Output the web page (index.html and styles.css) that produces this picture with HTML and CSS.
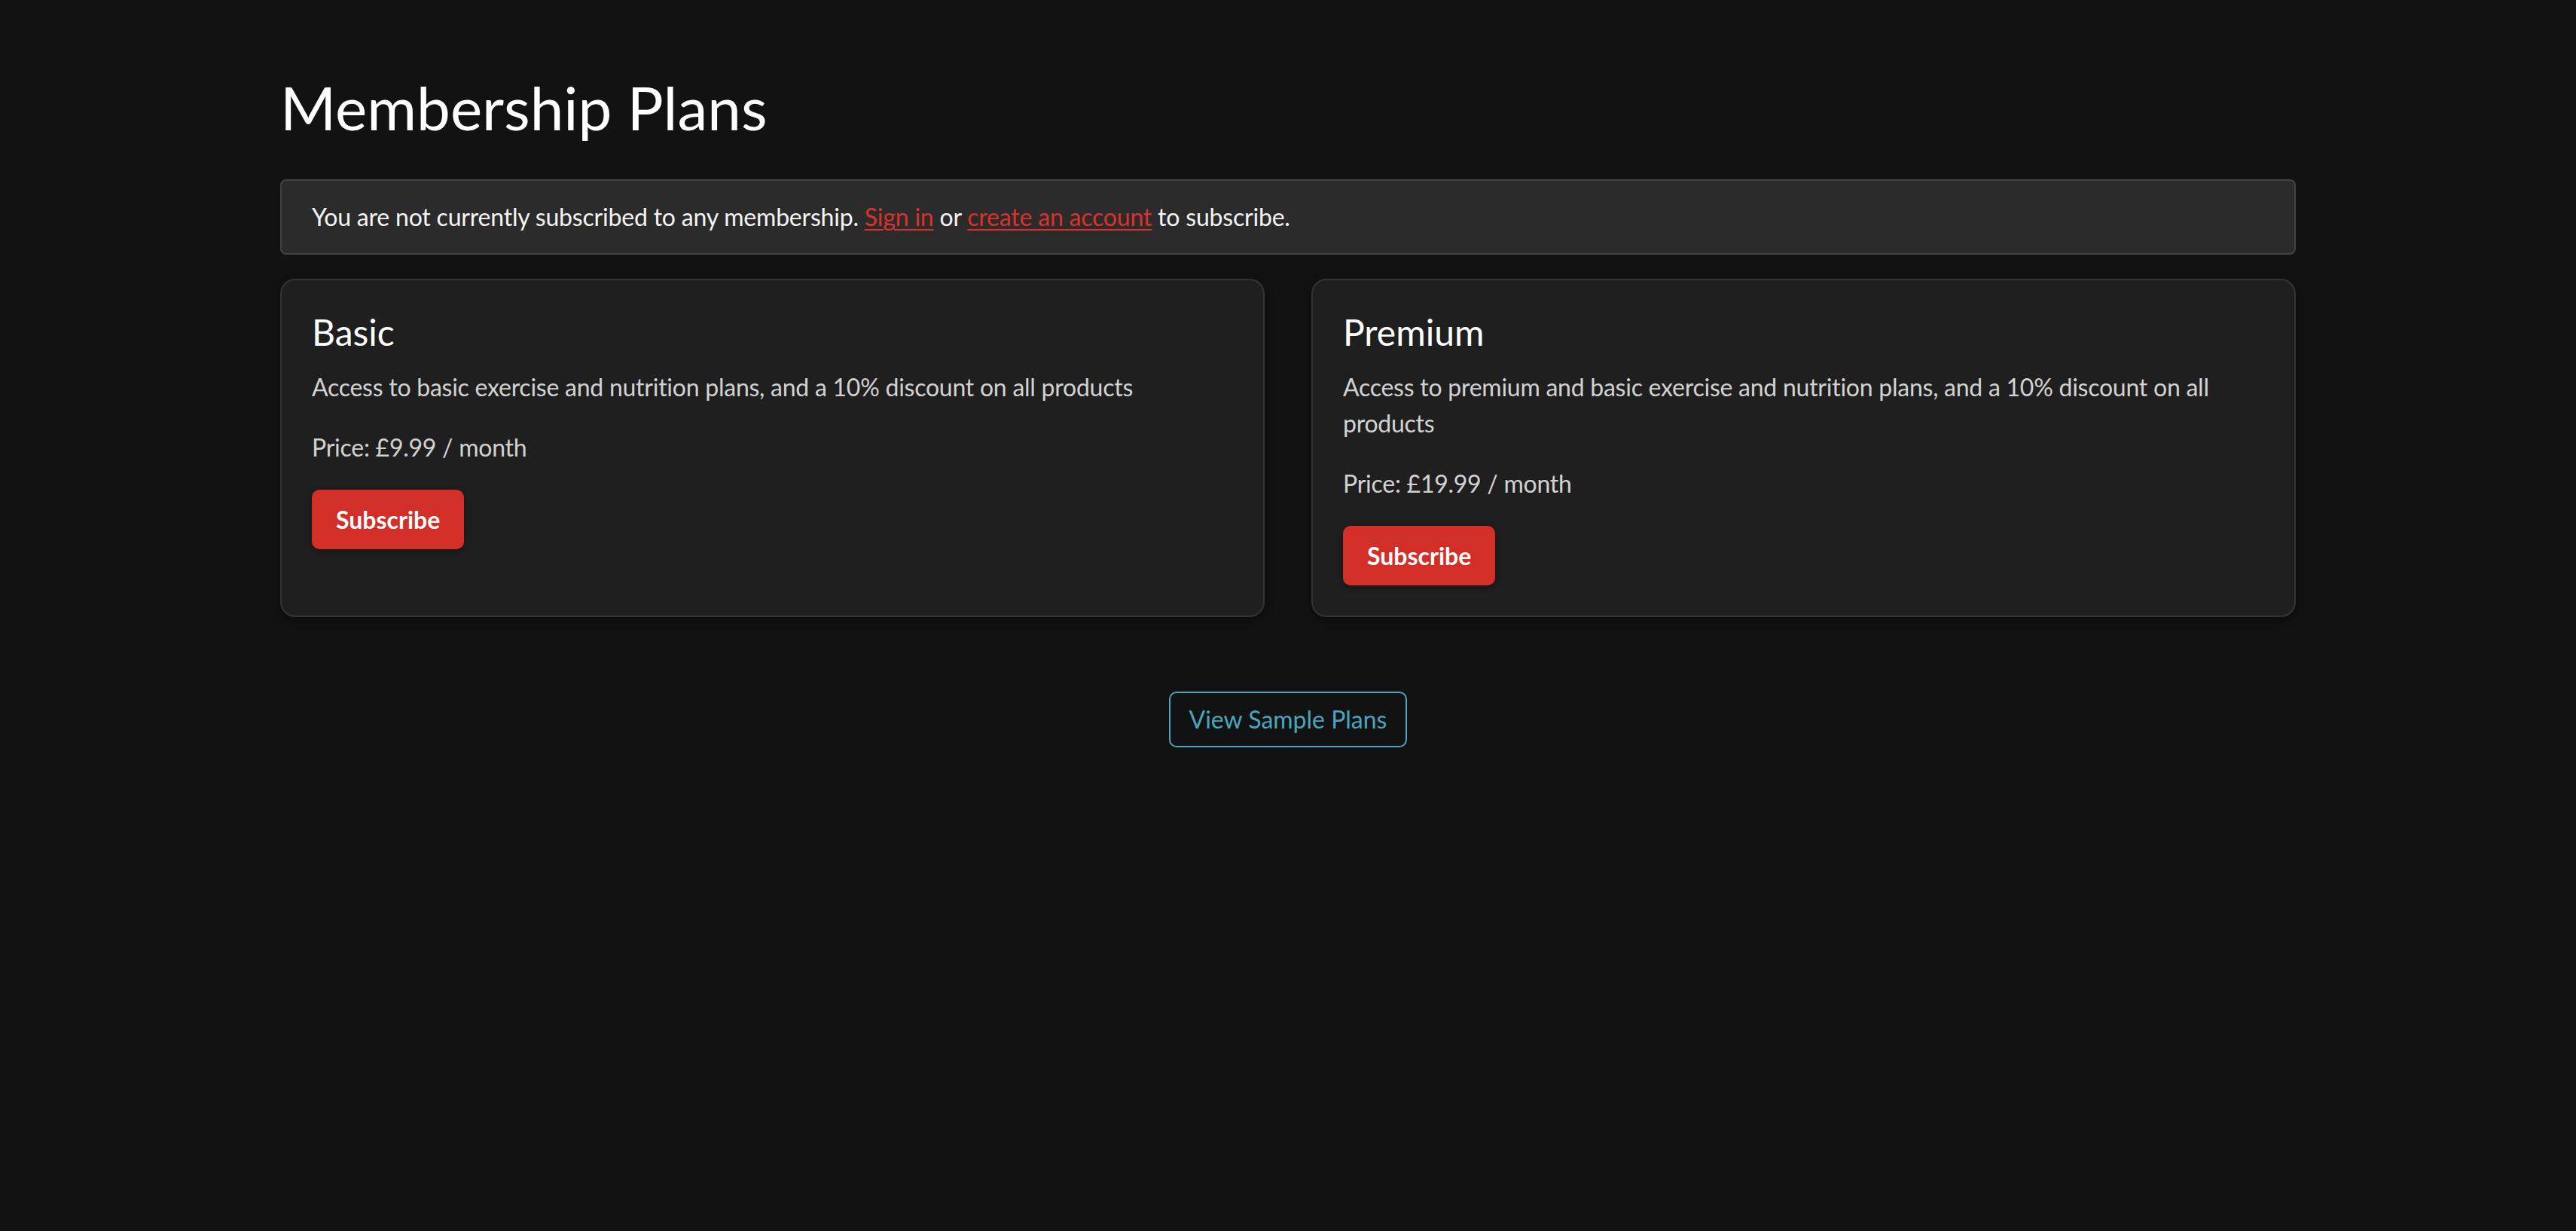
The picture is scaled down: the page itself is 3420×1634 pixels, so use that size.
FILE: index.html
```html
<!DOCTYPE html>
<html lang="en">
<head>
<meta charset="utf-8">
<title>Membership Plans</title>
<link rel="stylesheet" href="styles.css">
</head>
<body>
<main class="container">
  <h1 class="page-title">Membership Plans</h1>
  <div class="alert">You are not currently subscribed to any membership. <a href="#" class="alert-link">Sign in</a> or <a href="#" class="alert-link">create an account</a> to subscribe.</div>
  <div class="plans">
    <div class="card">
      <h4 class="card-title">Basic</h4>
      <p class="card-text">Access to basic exercise and nutrition plans, and a 10% discount on all products</p>
      <p class="card-text">Price: £9.99 / month</p>
      <div><button class="btn-subscribe">Subscribe</button></div>
    </div>
    <div class="card">
      <h4 class="card-title">Premium</h4>
      <p class="card-text">Access to premium and basic exercise and nutrition plans, and a 10% discount on all products</p>
      <p class="card-text">Price: £19.99 / month</p>
      <div><button class="btn-subscribe">Subscribe</button></div>
    </div>
  </div>
  <div class="sample-row">
    <a href="#" class="btn-outline">View Sample Plans</a>
  </div>
</main>
</body>
</html>
```

FILE: styles.css
```css
html, body {
  margin: 0;
  padding: 0;
  background: #121212;
  color: #f2f2f2;
  font-family: Lato, "Open Sans", Arial, sans-serif;
  font-size: 32px;
  line-height: 1.5;
}

.container {
  width: 2676px;
  margin: 0 auto;
  padding-top: 94px;
}

.page-title {
  margin: 0 0 48px 0;
  font-size: 80px;
  font-weight: 400;
  line-height: 1.2;
  color: #ffffff;
}

.alert {
  box-sizing: border-box;
  background: #2b2b2b;
  border: 2px solid #424242;
  border-radius: 8px;
  padding: 24px 40px;
  color: #f4f4f4;
  margin-bottom: 32px;
  letter-spacing: -0.2px;
}

.alert-link {
  color: #d9322b;
  text-decoration: underline;
  text-decoration-thickness: 2px;
  text-underline-offset: 4px;
}

.plans {
  display: grid;
  grid-template-columns: 1fr 1fr;
  gap: 62px;
}

.card {
  background: #1f1f1f;
  border: 2px solid #343434;
  border-radius: 20px;
  padding: 40px;
  box-shadow: 0 4px 12px rgba(0, 0, 0, 0.35);
}

.card-title {
  margin: 0 0 20px 0;
  font-size: 48px;
  font-weight: 400;
  line-height: 1.2;
  color: #ffffff;
}

.card-text {
  margin: 0 0 32px 0;
  color: #d2d2d2;
  letter-spacing: -0.25px;
}

.btn-subscribe {
  display: inline-block;
  height: 79px;
  padding: 0 32px;
  border: none;
  border-radius: 10px;
  background: #d12f27;
  color: #ffffff;
  font-family: inherit;
  font-size: 32px;
  font-weight: 700;
  line-height: 79px;
  box-shadow: 0 2px 8px rgba(0, 0, 0, 0.4);
  cursor: pointer;
}

.sample-row {
  display: flex;
  justify-content: center;
  margin-top: 99px;
}

.btn-outline {
  display: inline-block;
  padding: 11px 25px;
  border: 2px solid #4aa5bf;
  border-radius: 10px;
  color: #4aa5bf;
  text-decoration: none;
  font-size: 32px;
  line-height: 48px;
}
```
